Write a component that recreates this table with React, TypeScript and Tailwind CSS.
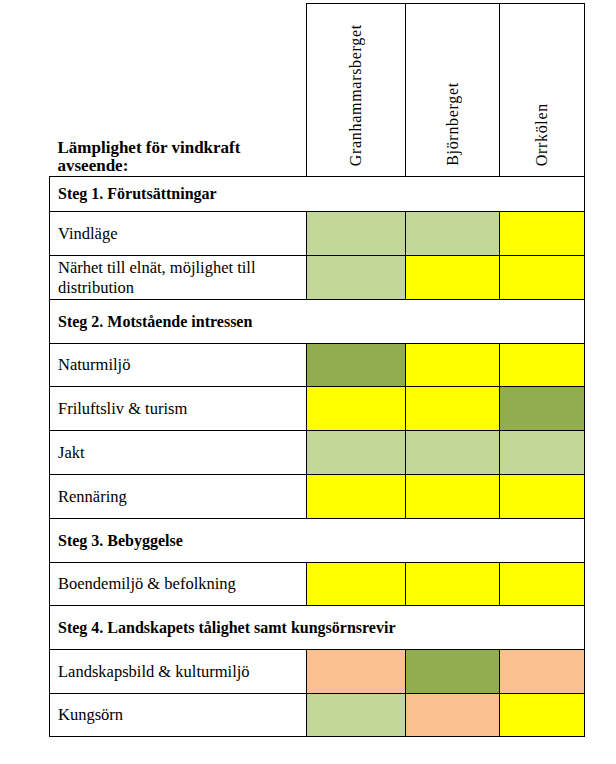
const LIGHT = "bg-[#c4d79b]";
const DARK = "bg-[#92ad50]";
const YELLOW = "bg-[#ffff00]";
const PEACH = "bg-[#fac090]";

type Row =
  | { kind: "step"; label: string; h: string }
  | { kind: "item"; label: string; h: string; cells: string[] };

const rows: Row[] = [
  { kind: "step", label: "Steg 1. Förutsättningar", h: "h-[35px]" },
  { kind: "item", label: "Vindläge", h: "h-[44px]", cells: [LIGHT, LIGHT, YELLOW] },
  {
    kind: "item",
    label: "Närhet till elnät, möjlighet till distribution",
    h: "h-[44px]",
    cells: [LIGHT, YELLOW, YELLOW],
  },
  { kind: "step", label: "Steg 2. Motstående intressen", h: "h-[44px]" },
  { kind: "item", label: "Naturmiljö", h: "h-[43px]", cells: [DARK, YELLOW, YELLOW] },
  { kind: "item", label: "Friluftsliv & turism", h: "h-[44px]", cells: [YELLOW, YELLOW, DARK] },
  { kind: "item", label: "Jakt", h: "h-[44px]", cells: [LIGHT, LIGHT, LIGHT] },
  { kind: "item", label: "Rennäring", h: "h-[44px]", cells: [YELLOW, YELLOW, YELLOW] },
  { kind: "step", label: "Steg 3. Bebyggelse", h: "h-[44px]" },
  { kind: "item", label: "Boendemiljö & befolkning", h: "h-[43px]", cells: [YELLOW, YELLOW, YELLOW] },
  { kind: "step", label: "Steg 4. Landskapets tålighet samt kungsörnsrevir", h: "h-[44px]" },
  { kind: "item", label: "Landskapsbild & kulturmiljö", h: "h-[44px]", cells: [PEACH, DARK, PEACH] },
  { kind: "item", label: "Kungsörn", h: "h-[43px]", cells: [LIGHT, PEACH, YELLOW] },
];

const places = ["Granhammarsberget", "Björnberget", "Orrkölen"];

export default function App() {
  return (
    <div className="min-h-[764px] w-[616px] bg-white pt-[3px] pl-[49px]">
      <table className="w-[535px] table-fixed border-collapse text-black">
        <colgroup>
          <col className="w-[257px]" />
          <col className="w-[99px]" />
          <col className="w-[94px]" />
          <col className="w-[85px]" />
        </colgroup>
        <tbody>
          <tr className="h-[173px]">
            <td className="border-b border-black px-2 pb-[1px] align-bottom font-['Liberation_Serif',serif] text-[17px] leading-[18px] font-bold">
              Lämplighet för vindkraft
              <br />
              avseende:
            </td>
            {places.map((p) => (
              <td key={p} className="border border-black pb-[4px] text-center align-bottom">
                <span className="inline-block rotate-180 font-['Liberation_Serif',serif] text-[16px] leading-[18px] tracking-[0.7px] [writing-mode:vertical-rl]">
                  {p}
                </span>
              </td>
            ))}
          </tr>
          {rows.map((r) =>
            r.kind === "step" ? (
              <tr key={r.label} className={r.h}>
                <td
                  colSpan={4}
                  className="border border-black px-2 align-middle font-['Liberation_Serif',serif] text-[16px] font-bold"
                >
                  {r.label}
                </td>
              </tr>
            ) : (
              <tr key={r.label} className={r.h}>
                <td className="border border-black px-2 align-middle font-['Liberation_Serif',serif] text-[16.5px] leading-[20px]">
                  {r.label}
                </td>
                {r.cells.map((c, i) => (
                  <td key={i} className={`border border-black ${c}`} />
                ))}
              </tr>
            ),
          )}
        </tbody>
      </table>
    </div>
  );
}
